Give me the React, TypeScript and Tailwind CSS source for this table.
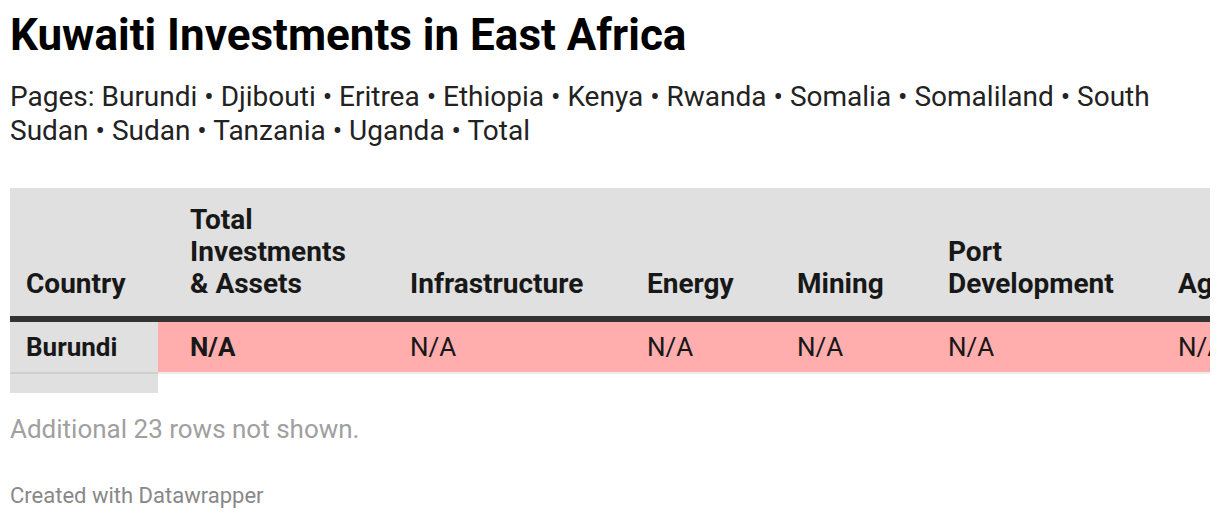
const columns = [
    { label: ["Total", "Investments", "& Assets"], width: "w-[220px]" },
    { label: ["Infrastructure"], width: "w-[237px]" },
    { label: ["Energy"], width: "w-[150px]" },
    { label: ["Mining"], width: "w-[151px]" },
    { label: ["Port", "Development"], width: "w-[230px]" },
    { label: ["Agriculture"], width: "w-[200px]" },
];

const pages = ["Burundi", "Djibouti", "Eritrea", "Ethiopia", "Kenya", "Rwanda", "Somalia", "Somaliland", "South Sudan", "Sudan", "Tanzania", "Uganda", "Total"];

export default function App() {
    return (
        <div className="min-h-[520px] bg-white p-[10px] font-['Roboto',sans-serif] text-[#181818]">
            <h1 className="text-[44px] font-bold leading-[50px] text-black">Kuwaiti Investments in East Africa</h1>

            <p className="mt-[20px] text-[28px] leading-[34px] text-[#222]">Pages: {pages.join(" • ")}</p>

            <div className="mt-[40px] w-[1200px] overflow-hidden">
                <div className="w-[1400px]">
                    {/* header */}
                    <div className="flex items-end bg-[#e0e0e0] h-[134px] pb-[16px] border-b-[6px] border-[#333]">
                        <div className="w-[148px] shrink-0 pl-[16px] text-[28px] leading-[32px] font-bold">Country</div>
                        {columns.map((c) => (
                            <div
                                key={c.label.join(" ")}
                                className={`${c.width} shrink-0 pl-[32px] text-[28px] leading-[32px] font-bold whitespace-nowrap`}
                            >
                                {c.label.map((l) => (
                                    <div key={l}>{l}</div>
                                ))}
                            </div>
                        ))}
                    </div>

                    {/* row */}
                    <div className="flex h-[52px] text-[26px]">
                        <div className="w-[148px] shrink-0 pl-[16px] flex items-center bg-[#e0e0e0] font-bold border-b-2 border-[#cfcfcf]">
                            Burundi
                        </div>
                        <div className="flex flex-1 bg-[#ffadad] border-b-2 border-[#ececec]">
                            {columns.map((c, i) => (
                                <div
                                    key={c.label.join(" ")}
                                    className={`${c.width} shrink-0 pl-[32px] flex items-center whitespace-nowrap ${i === 0 ? "font-bold" : ""}`}
                                >
                                    N/A
                                </div>
                            ))}
                        </div>
                    </div>
                    <div className="w-[148px] h-[19px] bg-[#e0e0e0]"></div>
                </div>
            </div>

            <p className="mt-[21px] text-[26px] leading-[30px] text-[#a0a0a0]">Additional 23 rows not shown.</p>

            <p className="mt-[40px] text-[22px] leading-[24px] text-[#888]">Created with Datawrapper</p>
        </div>
    );
}
